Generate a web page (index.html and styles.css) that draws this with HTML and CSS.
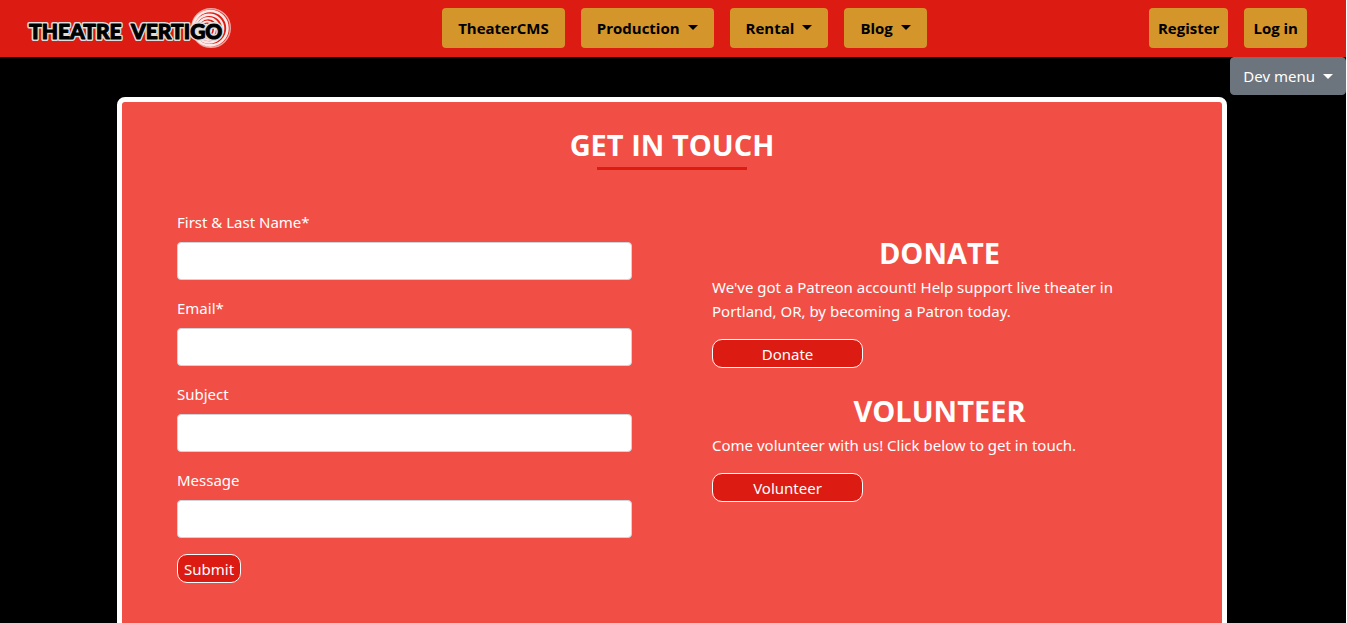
FILE: index.html
```html
<!DOCTYPE html>
<html lang="en">
<head>
<meta charset="utf-8">
<meta name="viewport" content="width=device-width, initial-scale=1">
<title>Contact - Theatre Vertigo</title>
<link rel="stylesheet" href="styles.css">
</head>
<body>
<header class="navbar">
  <a class="brand" href="#" aria-label="Theatre Vertigo">
    <svg class="logo" width="208" height="44" viewBox="0 0 208 44">
      <g fill="none" stroke="#fff">
        <circle cx="187" cy="22" r="19.3" stroke-width="1.4" opacity=".6"/>
        <circle cx="186.3" cy="22.2" r="17.2" stroke-width="2.6" opacity=".9"/>
        <circle cx="185.2" cy="22.6" r="13.9" stroke-width="2.4" opacity=".9"/>
        <circle cx="184.2" cy="23" r="10.8" stroke-width="2.2" opacity=".9"/>
        <circle cx="183.2" cy="23.4" r="7.8" stroke-width="2" opacity=".9"/>
        <circle cx="182.4" cy="23.7" r="5" stroke-width="1.8" opacity=".9"/>
      </g>
      <g class="logo-outline"><text x="5" y="33">THEATRE</text><text x="107" y="33">VERTIGO</text></g>
      <g class="logo-text" aria-hidden="true"><text x="5" y="33">THEATRE</text><text x="107" y="33">VERTIGO</text></g>
    </svg>
  </a>
  <nav class="nav-main">
    <a class="nav-button" href="#">TheaterCMS</a>
    <button class="nav-button caret" type="button">Production</button>
    <button class="nav-button caret" type="button">Rental</button>
    <button class="nav-button caret" type="button">Blog</button>
  </nav>
  <nav class="nav-account">
    <a class="nav-button compact" href="#">Register</a>
    <a class="nav-button compact" href="#">Log in</a>
  </nav>
</header>
<div class="dev-bar"><button class="dev-menu caret" type="button">Dev menu</button></div>
<div class="page">
<main class="panel">
  <h1 class="title">GET IN TOUCH</h1>
  <div class="columns">
    <form class="contact-form">
      <div class="field"><label for="name">First &amp; Last Name*</label><input id="name" type="text"></div>
      <div class="field"><label for="email">Email*</label><input id="email" type="email"></div>
      <div class="field"><label for="subject">Subject</label><input id="subject" type="text"></div>
      <div class="field"><label for="message">Message</label><input id="message" type="text"></div>
      <button class="action" type="submit">Submit</button>
    </form>
    <div class="support">
      <section class="block">
        <h2 class="heading">DONATE</h2>
        <p class="copy">We've got a Patreon account! Help support live theater in Portland, OR, by becoming a Patron today.</p>
        <button class="action wide" type="button">Donate</button>
      </section>
      <section class="block">
        <h2 class="heading">VOLUNTEER</h2>
        <p class="copy">Come volunteer with us! Click below to get in touch.</p>
        <button class="action wide" type="button">Volunteer</button>
      </section>
    </div>
  </div>
</main>
</div>
</body>
</html>
```

FILE: styles.css
```css
* { box-sizing: border-box; }
html { background: #fff; overflow: hidden; }
body {
  min-height: 100vh;
  margin: 0 1px 0 0;
  background: #000;
  color: #fff;
  font: 400 15px/24px "Noto Sans", "Open Sans", sans-serif;
}
button, input { font: inherit; color: inherit; }
button { cursor: pointer; }
.navbar {
  display: flex;
  justify-content: space-between;
  align-items: center;
  padding: 6px 39px 7px 24px;
  background: #dc1b12;
}
.brand { display: block; width: 196px; height: 44px; }
.logo { display: block; }
.logo-text, .logo-outline {
  font: 900 21px Lato, sans-serif;
  stroke-linejoin: round;
}
.logo-outline { fill: #ddd; stroke: #ddd; stroke-width: 4px; }
.logo-text { fill: #000; stroke: #000; stroke-width: 1px; }
.nav-main, .nav-account { display: flex; gap: 16px; }
.nav-button {
  display: flex;
  align-items: center;
  height: 40px;
  padding: 0 16px;
  border: 0;
  border-radius: 4px;
  background: #d4952a;
  color: #000;
  font-family: "Open Sans", sans-serif;
  font-weight: 700;
  text-decoration: none;
}
.compact { padding: 0 9px; }
.caret::after {
  content: "";
  display: inline-block;
  margin-left: 8px;
  border: 5px solid transparent;
  border-top-color: currentColor;
  border-bottom: 0;
  vertical-align: 3px;
}
.nav-button.caret::after { margin-bottom: 2px; }
.dev-bar { display: flex; justify-content: flex-end; }
.dev-menu {
  height: 38px;
  padding: 0 12px;
  border: 1px solid #6c757d;
  border-radius: 4px;
  background: #6c757d;
}
.page { padding: 2px 18px 40px 16px; }
.panel {
  max-width: 1110px;
  margin: 0 auto;
  padding: 24px 55px 72px;
  border: 5px solid #fff;
  border-radius: 8px;
  background: #f14e46;
}
.title, .heading {
  margin: 0;
  font-family: "Open Sans", sans-serif;
  font-size: 29px;
  line-height: 38px;
  font-weight: 700;
  text-align: center;
}
.title::after {
  content: "";
  display: block;
  width: 150px;
  height: 3px;
  margin: 3px auto 0;
  background: #dc1b12;
}
.columns {
  display: grid;
  grid-template-columns: 1fr 1fr;
  gap: 80px;
  margin-top: 40px;
}
.field { display: flex; flex-direction: column; gap: 8px; margin-bottom: 16px; }
.field input {
  width: 100%;
  height: 38px;
  padding: 6px 12px;
  border: 1px solid #ced4da;
  border-radius: 4px;
  background: #fff;
  color: #495057;
}
.action {
  height: 29px;
  padding: 0 6px;
  border: 1px solid #fff;
  border-radius: 10px;
  background: #dc1b12;
}
.wide { width: 151px; }
.support { display: flex; flex-direction: column; gap: 24px; padding-top: 24px; }
.heading { margin-bottom: 3px; }
.copy { margin: 0 0 16px; }
```
